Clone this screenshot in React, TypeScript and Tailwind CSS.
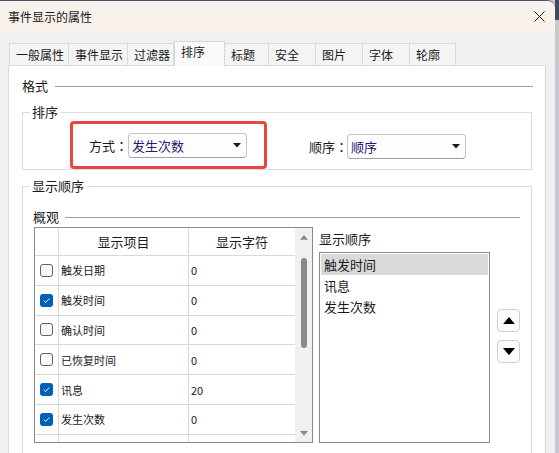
import React from 'react';

type Row = { name: string; chars: string; checked: boolean };

const tabs = [
  { label: '一般属性', w: 'w-[60px]' },
  { label: '事件显示', w: 'w-[60px]' },
  { label: '过滤器', w: 'w-[47px]' },
  { label: '排序', w: 'w-[51px]', selected: true },
  { label: '标题', w: 'w-[45px]' },
  { label: '安全', w: 'w-[48px]' },
  { label: '图片', w: 'w-[48px]' },
  { label: '字体', w: 'w-[48px]' },
  { label: '轮廓', w: 'w-[47px]' },
];

const rows: Row[] = [
  { name: '触发日期', chars: '0', checked: false },
  { name: '触发时间', chars: '0', checked: true },
  { name: '确认时间', chars: '0', checked: false },
  { name: '已恢复时间', chars: '0', checked: false },
  { name: '讯息', chars: '20', checked: true },
  { name: '发生次数', chars: '0', checked: true },
];

const order = ['触发时间', '讯息', '发生次数'];

const CheckBox = ({ checked }: { checked: boolean }) =>
  checked ? (
    <span className="flex h-[13px] w-[13px] items-center justify-center rounded-[3px] bg-[#005fb8]">
      <svg width="9" height="9" viewBox="0 0 9 9">
        <path d="M1.8 4.6 3.7 6.4 7.3 2.6" fill="none" stroke="#fff" strokeWidth="1" />
      </svg>
    </span>
  ) : (
    <span className="h-[13px] w-[13px] rounded-[3px] border border-[#616161] bg-[#f9f9f9]" />
  );

const Combo = ({ value }: { value: string }) => (
  <div className="flex h-[25px] w-[119px] shrink-0 items-center justify-between rounded-[4px] border border-[#c4c4c4] border-b-[#a0a0a0] bg-[#fdfdfd] pl-[3px] pr-[5px]">
    <span className="text-[#1d2170]">{value}</span>
    <svg width="8" height="5" viewBox="0 0 8 5">
      <path d="M0 0h8L4 4.5z" fill="#1a1a1a" />
    </svg>
  </div>
);

const Label = ({ text, w }: { text: string; w: string }) => (
  <span className={`${w} shrink-0 whitespace-nowrap`}>
    {text}
    <span className="font-['Noto_Sans_CJK_TC',sans-serif]">：</span>
  </span>
);

const Triangle = ({ up, color, size }: { up?: boolean; color: string; size: number }) => (
  <svg width={size} height={size * 0.6} viewBox="0 0 10 6">
    <path d={up ? 'M0 6h10L5 0z' : 'M0 0h10L5 6z'} fill={color} />
  </svg>
);

export default function App() {
  return (
    <div className="flex h-[453px] w-[559px] overflow-hidden bg-[#c7c5d8] font-['Microsoft_YaHei','Noto_Sans_CJK_SC',sans-serif] text-[12px] leading-[16px] text-[#1a1a1a]">
      <div className="flex w-[555px] shrink-0 flex-col overflow-hidden rounded-tr-[8px] border-t border-[#4a5668] bg-[#f0f0f0]">
        {/* title bar */}
        <div className="flex h-[31px] shrink-0 items-center justify-between bg-[#f8f1ec] pl-[8px] pr-[10px]">
          <span className="text-[#1a1a1a]">事件显示的属性</span>
          <svg width="11" height="11" viewBox="0 0 11 11">
            <path d="M0.5 0.5l10 10M10.5 0.5l-10 10" stroke="#1a1a1a" strokeWidth="1" />
          </svg>
        </div>

        <div className="flex flex-1 flex-col pl-[8px] pr-[9px] pt-[9px]">
          {/* tabs */}
          <div className="flex h-[24px] items-end pl-[1px]">
            {tabs.map((t) =>
              t.selected ? (
                <div
                  key={t.label}
                  className={`${t.w} relative z-10 -mb-px flex h-[25px] items-start border border-b-0 border-[#d6d6d6] bg-[#fafafa] pl-[6px] pt-[2px]`}
                >
                  {t.label}
                </div>
              ) : (
                <div
                  key={t.label}
                  className={`${t.w} -ml-px flex h-[22px] items-center border border-b-0 border-[#dadada] bg-[#f4f4f4] pl-[6px] first:ml-0`}
                >
                  {t.label}
                </div>
              ),
            )}
          </div>

          {/* panel */}
          <div className="flex flex-1 flex-col border border-[#d9d9d9] bg-white px-[13px] text-[13px]">
            <div className="mt-[10px] flex h-[20px] items-center">
              <span>格式</span>
              <div className="ml-[7px] mr-[-1px] h-px flex-1 bg-[#a0a0a0]" />
            </div>

            {/* sort group */}
            <fieldset className="mt-[8px] h-[66px] shrink-0 border border-[#dcdcdc] p-0">
              <legend className="ml-[7px] px-[2px]">排序</legend>
              <div className="flex items-start">
                <div className="ml-[47px] mt-[1px] flex h-[48px] w-[197px] shrink-0 items-center rounded-[4px] border-[3px] border-[#e8473f] pl-[16px] pt-[1px]">
                  <Label text="方式" w="w-[39px]" />
                  <Combo value="发生次数" />
                </div>
                <div className="ml-[42px] mt-[14px] flex items-center">
                  <Label text="顺序" w="w-[38px]" />
                  <Combo value="顺序" />
                </div>
              </div>
            </fieldset>

            {/* display order group */}
            <fieldset className="mt-[8px] h-[320px] shrink-0 border border-[#dcdcdc] p-0">
              <legend className="ml-[7px] px-[2px]">显示顺序</legend>
              <div className="mt-[15px] flex h-[16px] items-center pl-[10px] pr-[11px]">
                <span>概观</span>
                <div className="ml-[6px] h-px flex-1 bg-[#a0a0a0]" />
              </div>

              <div className="mt-[2px] flex pl-[11px]">
                {/* table */}
                <div className="flex h-[216px] w-[279px] border border-[#8a8a8a] bg-white">
                  <div className="flex w-[261px] flex-col">
                    <div className="flex h-[28px] shrink-0 border-b border-[#d9d9d9]">
                      <div className="w-[24px] border-r border-[#d9d9d9]" />
                      <div className="flex w-[130px] items-center justify-center border-r border-[#d9d9d9] pt-[1px]">
                        显示项目
                      </div>
                      <div className="flex flex-1 items-center justify-center pt-[1px]">显示字符</div>
                    </div>
                    {rows.map((r) => (
                      <div key={r.name} className="flex h-[29.8px] shrink-0 border-b border-[#d9d9d9] text-[11px]">
                        <div className="flex w-[24px] items-center border-r border-[#d9d9d9] pl-[5px]">
                          <CheckBox checked={r.checked} />
                        </div>
                        <div className="flex w-[130px] items-center border-r border-[#d9d9d9] pl-[2px]">
                          {r.name}
                        </div>
                        <div className="flex flex-1 items-center pl-[2px]">{r.chars}</div>
                      </div>
                    ))}
                    <div className="flex flex-1">
                      <div className="w-[24px] border-r border-[#d9d9d9]" />
                      <div className="w-[130px] border-r border-[#d9d9d9]" />
                    </div>
                  </div>
                  {/* scrollbar */}
                  <div className="flex w-[17px] flex-col items-center bg-[#f0f0f0] pt-[7px]">
                    <Triangle up color="#8a8a8a" size={8} />
                    <div className="mt-[18px] h-[90px] w-[6px] rounded-full bg-[#8a8a8a]" />
                    <div className="flex-1" />
                    <div className="mb-[6px]">
                      <Triangle color="#8a8a8a" size={8} />
                    </div>
                  </div>
                </div>

                {/* display order list */}
                <div className="ml-[6px] flex flex-col pt-[4px]">
                  <span>显示顺序</span>
                  <div className="mt-[5px] h-[191px] w-[171px] border border-[#8a8a8a] bg-white p-px">
                    {order.map((o, i) => (
                      <div
                        key={o}
                        className={`flex h-[21px] items-center pl-[3px] ${i === 0 ? 'bg-[#d9d9d9]' : ''}`}
                      >
                        {o}
                      </div>
                    ))}
                  </div>
                </div>

                {/* move buttons */}
                <div className="ml-[7px] mt-[82px] flex flex-col gap-[8px]">
                  <button className="flex h-[23px] w-[23px] items-center justify-center rounded-[4px] border border-[#d0d0d0] bg-[#fdfdfd]">
                    <Triangle up color="#000" size={12} />
                  </button>
                  <button className="flex h-[23px] w-[23px] items-center justify-center rounded-[4px] border border-[#d0d0d0] bg-[#fdfdfd]">
                    <Triangle color="#000" size={12} />
                  </button>
                </div>
              </div>
            </fieldset>
          </div>
        </div>
      </div>
      <div className="flex flex-1 flex-col">
        <div className="h-[20px] bg-[#3f4a5c]" />
        <div className="h-[40px] bg-[#c8c8c8]" />
        <div className="flex-1 bg-[#c7c5d8]" />
      </div>
    </div>
  );
}
